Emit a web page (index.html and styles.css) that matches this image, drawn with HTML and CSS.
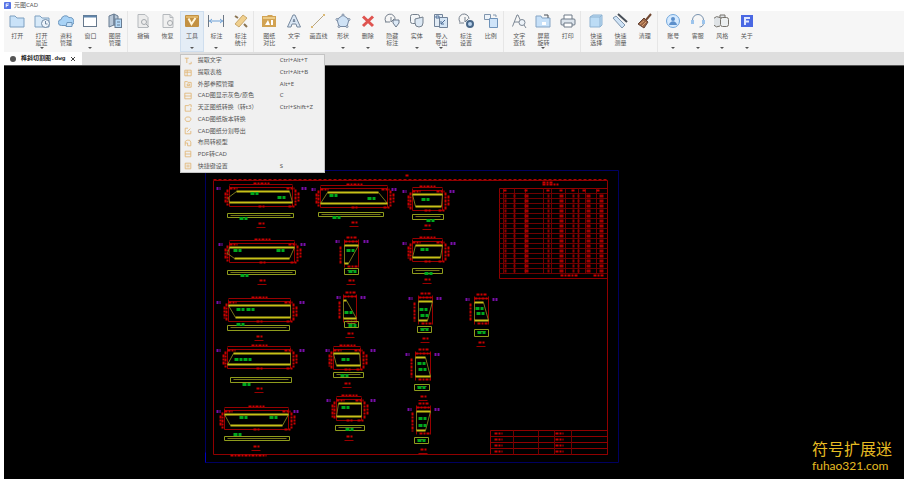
FILE: index.html
```html
<!DOCTYPE html>
<html lang="zh-CN">
<head>
    <meta charset="UTF-8">
    <meta name="viewport" content="width=device-width, initial-scale=1.0">
    <title>元图CAD</title>
    <link rel="stylesheet" href="styles.css">
</head>
<body>
    <header class="titlebar">
        <svg class="logo" viewBox="0 0 8 8"><rect width="8" height="8" rx="1" fill="#5573e6"/><path d="M2.5 6V2.2h3M2.5 4h2.5" stroke="#fff" fill="none"/></svg>
        <span>元图CAD</span>
    </header>

    <nav class="ribbon">
        <!-- File -->
        <div class="group five">
            <button class="tool">
                <svg viewBox="0 0 16 16"><path d="M1 3h5l2 2h7v9H1z" fill="#c9e2f8" stroke="#7d9fc0"/></svg>
                <span>打开</span>
            </button>
            <button class="tool more">
                <svg viewBox="0 0 16 16"><path d="M1 3h5l2 2h7v9H1z" fill="#d8eaf9" stroke="#7d9fc0"/><circle cx="11.5" cy="10.5" r="4" fill="#eef4fa" stroke="#7189a4"/><path d="M11.5 8v3h2" fill="none" stroke="#7189a4"/></svg>
                <span>打开<br>最近</span>
            </button>
            <button class="tool">
                <svg viewBox="0 0 16 16"><path d="M3.5 12.5a3 3 0 0 1-.3-6A4.3 4.3 0 0 1 11 4.600a4 4 0 0 1 1.500 7.900z" fill="#a9d3f6" stroke="#6f97bd"/><path d="M9 9.500h5v4H8z" fill="#c9e2f8" stroke="#6f97bd"/></svg>
                <span>资料<br>管理</span>
            </button>
            <button class="tool more">
                <svg viewBox="0 0 16 16"><rect x="1.500" y="2.500" width="13" height="11" fill="#fff" stroke="#66788c"/><path d="M1.500 3.500h13" stroke="#5f84ab" stroke-width="2"/></svg>
                <span>窗口</span>
            </button>
            <button class="tool">
                <svg viewBox="0 0 16 16"><path d="M2 3l5-2v11l-5 2zM7 1l4 2v10l-4-1z" fill="#b9c8d8" stroke="#687c92"/><rect x="8" y="6" width="6.500" height="8.500" fill="#b5d9f7" stroke="#687c92"/><path d="M10 9h3M10 12h3" stroke="#687c92"/></svg>
                <span>图层<br>管理</span>
            </button>
        </div>

        <!-- Edit -->
        <div class="group five">
            <button class="tool">
                <svg viewBox="0 0 16 16"><path d="M3 1.500h7l3 3v10H3z" fill="#ececec" stroke="#b4b8bc"/><circle cx="9" cy="9" r="2.500" fill="none" stroke="#a4a8ac"/><path d="M11 11l3 3" stroke="#a4a8ac"/></svg>
                <span>撤销</span>
            </button>
            <button class="tool">
                <svg viewBox="0 0 16 16"><path d="M3 1.500h7l3 3v10H3z" fill="#f0f0f0" stroke="#b4b8bc"/><circle cx="10" cy="10" r="2.500" fill="none" stroke="#a4a8ac"/><path d="M10 1.500v3h3" fill="none" stroke="#b4b8bc"/></svg>
                <span>恢复</span>
            </button>
            <div class="dropdown">
                <button class="tool more active" aria-expanded="true">
                    <svg viewBox="0 0 16 16"><rect x="1" y="2" width="14" height="12" rx="1" fill="#c29143"/><path d="M2 3h12v2H2z" fill="#dfb467"/><path d="M4.500 5.500L7.500 11l4-6" fill="none" stroke="#fff6dc" stroke-width="2"/></svg>
                    <span>工具</span>
                </button>
                <div class="menu">
                    <button><svg viewBox="0 0 10 10"><path d="M1 1.500h5M3.500 1.500v6M6 8.500h3V6"/></svg><span>提取文字</span><kbd>Ctrl+Alt+T</kbd></button>
                    <button><svg viewBox="0 0 10 10"><path d="M1 1.500h8v7H1zM1 4h8M4 1.500v7"/></svg><span>提取表格</span><kbd>Ctrl+Alt+B</kbd></button>
                    <button><svg viewBox="0 0 10 10"><path d="M1 2h3l1 1h4v6H1zM4 5h3v2H4z"/></svg><span>外部参照管理</span><kbd>Alt+E</kbd></button>
                    <button><svg viewBox="0 0 10 10"><path d="M1 1.500h8v7H1zM1 5h8"/></svg><span>CAD图显示灰色/原色</span><kbd>C</kbd></button>
                    <button><svg viewBox="0 0 10 10"><path d="M6 2H1.500v7h7V5M6 1h3v3"/></svg><span>天正图纸转换（转t3）</span><kbd>Ctrl+Shift+Z</kbd></button>
                    <button><svg viewBox="0 0 10 10"><path d="M3 2.500h4L9 5 7 8H3L1 5z"/></svg><span>CAD图纸版本转换</span></button>
                    <button><svg viewBox="0 0 10 10"><path d="M5 1.500H1.500v7h7V5M4 6l4-4"/></svg><span>CAD图纸分割导出</span></button>
                    <button><svg viewBox="0 0 10 10"><path d="M1.500 8.500V3L4 1.500h3L8.500 4v4.500h-4V5h-3"/></svg><span>布局转模型</span></button>
                    <button><svg viewBox="0 0 10 10"><path d="M1.500 1.500h7v7h-7zM1.500 5h7"/></svg><span>PDF转CAD</span></button>
                    <button><svg viewBox="0 0 10 10"><path d="M1.500 1.500h7v7h-7zM3 4h4M3 6h4"/></svg><span>快捷键设置</span><kbd>S</kbd></button>
                </div>
            </div>
            <button class="tool more">
                <svg viewBox="0 0 16 16"><path d="M.5 2v12M15.500 2v12" stroke="#6b7785"/><path d="M1 8h14M4 6L1.500 8 4 10M12 6l2.500 2-2.500 2" fill="none" stroke="#6ea2d8"/></svg>
                <span>标注</span>
            </button>
            <button class="tool">
                <svg viewBox="0 0 16 16"><path d="M2 11l8-9 4 3-8 9z" fill="#f0d08f" stroke="#c9a76a"/><path d="M2 3l3 2M11 11l3 3" stroke="#8c7552" stroke-width="2"/></svg>
                <span>标注<br>统计</span>
            </button>
        </div>

        <!-- Draw and annotate -->
        <div class="group ten">
            <button class="tool">
                <svg viewBox="0 0 16 16"><path d="M1 3h5l1-1h4l1 1h3v11H1z" fill="#d2a353"/><path d="M2 4h12v2H2z" fill="#eccb86"/><path d="M4 12l3-5 2 5zM10 7h2v5h-2z" fill="#fff"/></svg>
                <span>图纸<br>对比</span>
            </button>
            <button class="tool more">
                <svg viewBox="0 0 16 16"><path d="M1.500 14L7 2h2l5.500 12H11l-1-3H6l-1 3zM7 8.500h2L8 6z" fill="#d9e6f4" stroke="#77899e"/></svg>
                <span>文字</span>
            </button>
            <button class="tool">
                <svg viewBox="0 0 16 16"><path d="M2 14L14 2" stroke="#b7a684"/><path d="M1 13h2v2H1zM13 1h2v2h-2z" fill="#dbb975"/></svg>
                <span>画直线</span>
            </button>
            <button class="tool more">
                <svg viewBox="0 0 16 16"><path d="M8 2l6 4.500L12 13.500H4L2 6.500z" fill="#cfe2f5" stroke="#778aa3"/><g fill="#fff" stroke="#778aa3"><circle cx="8" cy="2" r="1"/><circle cx="14" cy="6.500" r="1"/><circle cx="12" cy="13.500" r="1"/><circle cx="4" cy="13.500" r="1"/><circle cx="2" cy="6.500" r="1"/></g></svg>
                <span>形状</span>
            </button>
            <button class="tool more">
                <svg viewBox="0 0 16 16"><path d="M3 3.500l10 9.500M13 3.500L3 13" stroke="#df5450" stroke-width="3"/></svg>
                <span>删除</span>
            </button>
            <button class="tool">
                <svg viewBox="0 0 16 16"><path d="M2 9a5 5 0 1 1 9-2M1 9h5M7 4v5l3-3" fill="none" stroke="#77818e"/><path d="M9 7h6v3l-3 4-3-4z" fill="#dce9f6" stroke="#6d7b8c"/></svg>
                <span>隐藏<br>标注</span>
            </button>
            <button class="tool more">
                <svg viewBox="0 0 16 16"><rect x="1.500" y="1.500" width="9" height="9" rx="2" fill="#f4f6f8" stroke="#75808d"/><path d="M6 6l8-2v6a4 4 0 0 1-8 0z" fill="#dce8f4" stroke="#75808d"/></svg>
                <span>实体</span>
            </button>
            <button class="tool more">
                <svg viewBox="0 0 16 16"><path d="M1.500 1.500h8v12h-8z" fill="#e3ecf5" stroke="#71839a"/><path d="M6.500 4.500h8v10h-8z" fill="#d5e5f5" stroke="#71839a"/><path d="M3 3h3v2H3zM12 7l-4 4M8 8v3h3" fill="none" stroke="#4f6f98"/></svg>
                <span>导入<br>导出</span>
            </button>
            <button class="tool">
                <svg viewBox="0 0 16 16"><path d="M2 9a5 5 0 1 1 9-3M1 10h5M7 4v5l3-3" fill="none" stroke="#77818e"/><circle cx="12" cy="11" r="3" fill="#b8d2ec" stroke="#496889" stroke-width="2"/></svg>
                <span>标注<br>设置</span>
            </button>
            <button class="tool">
                <svg viewBox="0 0 16 16"><path d="M1.500 1.500h6v5h-6z" fill="#eef4fa" stroke="#8196ae"/><path d="M6.500 5.500h8v9h-8z" fill="#cfe4f9" stroke="#6f93ba"/><path d="M10 2h3v2" fill="none" stroke="#8196ae"/></svg>
                <span>比例</span>
            </button>
        </div>

        <!-- Output -->
        <div class="group three">
            <button class="tool">
                <svg viewBox="0 0 16 16"><path d="M1.500 13.500L6 2h1l4 9M3 9h5" fill="none" stroke="#7d8895"/><circle cx="11" cy="9.500" r="3" fill="#edf3f9" stroke="#7d8895"/><path d="M13 12l2 3" stroke="#7d8895"/></svg>
                <span>文字<br>查找</span>
            </button>
            <button class="tool more">
                <svg viewBox="0 0 16 16"><path d="M1 3h5l1 2h8v9H1z" fill="#c6e0f8" stroke="#85a4c4"/><path d="M7 9h4v3H7z" fill="#fff"/><path d="M9 2h4v3" fill="none" stroke="#444c56"/></svg>
                <span>屏幕<br>旋转</span>
            </button>
            <button class="tool">
                <svg viewBox="0 0 16 16"><path d="M4 6V2h8v4" fill="#fff" stroke="#6e7a88"/><rect x="1" y="6" width="14" height="6" rx="1" fill="#dce4ec" stroke="#6e7a88"/><path d="M4 10h8v4H4z" fill="#fff" stroke="#6e7a88"/></svg>
                <span>打印</span>
            </button>
        </div>

        <!-- Quick tools -->
        <div class="group three">
            <button class="tool">
                <svg viewBox="0 0 16 16"><path d="M2 4l3-2h9v10l-2 2H2z" fill="#bcdcf5" stroke="#8fb3d2"/><path d="M2 4h10v10M12 4l2-2" fill="none" stroke="#8fb3d2"/></svg>
                <span>快速<br>选择</span>
            </button>
            <button class="tool">
                <svg viewBox="0 0 16 16"><path d="M1 5l3-2 9 9-3 3z" fill="#cfe3f6" stroke="#7f96ae"/><path d="M6 1l9 8" stroke="#474e57" stroke-width="2"/></svg>
                <span>快速<br>测量</span>
            </button>
            <button class="tool">
                <svg viewBox="0 0 16 16"><path d="M14 1L9 7" stroke="#70462f" stroke-width="2"/><path d="M7 5l4 4-4 6-6-4z" fill="#9a6446" stroke="#634334"/><path d="M3 11l4-3M5 13l4-4" stroke="#d7a26e"/></svg>
                <span>清理</span>
            </button>
        </div>

        <!-- Account -->
        <div class="group four">
            <button class="tool more">
                <svg viewBox="0 0 16 16"><circle cx="8" cy="8" r="6.500" fill="#d5eaff" stroke="#74a8dc"/><circle cx="8" cy="6" r="2" fill="#5c8fcb"/><path d="M4 12c1-5 7-5 8 0z" fill="#5c8fcb"/></svg>
                <span>账号</span>
            </button>
            <button class="tool more">
                <svg viewBox="0 0 16 16"><path d="M2.500 8V7a5.500 5.500 0 0 1 11 0v3c0 3-2 4-4 4" fill="none" stroke="#7892ae"/><path d="M1 7h3v4H1zM12 7h3v4h-3z" fill="#9cc4ec"/></svg>
                <span>客服</span>
            </button>
            <button class="tool more">
                <svg viewBox="0 0 16 16"><path d="M6 4.500A5 5 0 1 0 6 13M6 2h5v3H6z" fill="#dfe3e6" stroke="#77736c"/><rect x="6.500" y="4.500" width="8" height="9" rx="2" fill="#eceff0" stroke="#77736c"/></svg>
                <span>风格</span>
            </button>
            <button class="tool more">
                <svg viewBox="0 0 16 16"><rect x="2" y="2" width="12" height="12" fill="#4a68e3"/><path d="M6 12V5h5M6 8.500h4" fill="none" stroke="#dfe7ff" stroke-width="2"/></svg>
                <span>关于</span>
            </button>
        </div>
    </nav>

    <div class="tabs">
        <div class="tab">
            <i class="dot"></i>
            <span>榫斜切割图.dwg</span>
            <button aria-label="关闭"><svg viewBox="0 0 6 6"><path d="M1 1l4 4M5 1L1 5" stroke="#444"/></svg></button>
        </div>
    </div>

    <main class="canvas">
        <svg id="drawing" viewBox="0 0 900 413" preserveAspectRatio="xMinYMin meet"></svg>
        <div class="watermark">
            <p class="name">符号扩展迷</p>
            <p class="site">fuhao321.com</p>
        </div>
    </main>

    <script src="drawing.js"></script>
</body>
</html>
```
FILE: styles.css
```css
* {
    box-sizing: border-box;
}

body {
    margin: 0;
    padding: 0 3px 0 4px;
    min-height: 100vh;
    display: flex;
    flex-direction: column;
    background: #fff;
    color: #555;
    font-family: "Noto Sans", "Noto Sans CJK SC", sans-serif;
    font-size: 6px;
    line-height: 7px;
}

button {
    margin: 0;
    padding: 0;
    border: 0;
    background: none;
    color: inherit;
    font: inherit;
}

/* Title bar */
.titlebar {
    display: flex;
    align-items: center;
    gap: 3px;
    height: 11px;
}

.logo {
    width: 7px;
    height: 7px;
}

/* Ribbon */
.ribbon {
    display: flex;
    gap: 3px;
    height: 41px;
    padding-left: 1px;
    background: #f6f6f6;
}

.group {
    display: flex;
    border-right: 1px solid #e6e6e6;
}

.group:last-child {
    border-right: 0;
}

.three {
    width: 74px;
}

.four {
    width: 98px;
}

.five {
    width: 123px;
}

.ten {
    width: 247px;
}

.tool,
.dropdown {
    flex: 1 1 0;
    min-width: 0;
}

.tool {
    display: flex;
    flex-direction: column;
    align-items: center;
    padding-top: 2px;
    height: 41px;
    text-align: center;
    white-space: nowrap;
}

.tool svg {
    width: 16px;
    height: 16px;
    flex: none;
}

.tool span {
    margin-top: 4px;
    height: 14px;
}

.more::after {
    content: "";
    border: 2px solid transparent;
    border-top-color: #555;
    border-bottom: 0;
}

.tool.active {
    width: 100%;
    background: #e4edf6;
    box-shadow: inset 0 0 0 1px #cfdeee;
}

/* Dropdown menu */
.dropdown {
    position: relative;
}

.menu {
    position: absolute;
    z-index: 1;
    top: 43px;
    left: 0;
    display: flex;
    flex-direction: column;
    width: 145px;
    min-height: 119px;
    background: #f0f0f0;
    border: 1px solid #c4c4c4;
}

.menu button {
    flex: 1;
    display: grid;
    grid-template-columns: 8px 76px 1fr;
    column-gap: 6px;
    align-items: center;
    padding-left: 3px;
    text-align: left;
    white-space: nowrap;
}

.menu svg {
    width: 8px;
    height: 8px;
    fill: none;
    stroke: #dfb26f;
}

.menu kbd {
    font: inherit;
}

/* File tabs */
.tabs {
    height: 14px;
    background: #dedede;
    border-bottom: 1px solid #555;
}

.tab {
    display: inline-flex;
    align-items: center;
    gap: 5px;
    height: 13px;
    padding: 0 6px;
    background: #fff;
    color: #222;
    font-family: "Liberation Mono", "Noto Sans CJK SC", monospace;
    font-weight: bold;
    vertical-align: top;
}

.tab button,
.tab svg {
    display: block;
    width: 6px;
    height: 6px;
}

.dot {
    width: 6px;
    height: 6px;
    border-radius: 50%;
    background: #555;
}

/* Drawing area */
.canvas {
    position: relative;
    flex: 1;
    background: #000;
}

#drawing {
    display: block;
    width: 100%;
}

#drawing * {
    fill: none;
}

#drawing .sheet {
    stroke: #000060;
}

#drawing .corner {
    stroke: #0000c0;
}

#drawing .frame {
    stroke: #900000;
}

#drawing .ticks {
    stroke: #b00000;
    stroke-dasharray: 3 2;
}

#drawing .grid {
    stroke: #700000;
}

#drawing .figures {
    stroke: #900000;
    stroke-width: 2;
    stroke-dasharray: 3 2;
}

#drawing .figures-wide {
    stroke: #a80000;
    stroke-width: 4;
    stroke-dasharray: 3 2;
}

#drawing .edge {
    stroke: #c8c018;
    stroke-width: 2;
}

#drawing .side {
    stroke: #77751a;
}

#drawing .strip {
    stroke: #8f9c1c;
}

#drawing .dim {
    stroke: #980000;
}

#drawing .value {
    stroke: #c80000;
    stroke-width: 2;
    stroke-dasharray: 3 1 2 1;
}

#drawing .note {
    stroke: #00a81e;
    stroke-width: 3;
    stroke-dasharray: 4 1;
}

#drawing .mark {
    stroke: #780fa8;
    stroke-width: 3;
    stroke-dasharray: 2 1;
}

.watermark {
    position: absolute;
    right: 12px;
    bottom: 7px;
    color: #e6bb22;
}

.watermark p {
    margin: 0;
}

.name {
    font-family: "Liberation Sans", "Noto Sans CJK SC", sans-serif;
    font-size: 16px;
    line-height: 20px;
}

.site {
    font-family: Lato, sans-serif;
    font-size: 12px;
    line-height: 12px;
}
```
FILE: drawing.js
```javascript
const drawing = document.getElementById('drawing');
const OFFSET = [4, 66];

// top / bottom: x1, x2, y of the two long edges, tip: x of a pointed left end
// strip: x1, y1, x2, y2; notes: centres of the green labels; marks: purple section marks
const PARTS = [
    { top: [236, 289, 191], bottom: [229, 292, 202], tip: 228, strip: [227, 213, 293, 217], notes: [[254, 193], [281, 197], [243, 218]], marks: [218, 303, 188] },
    { top: [327, 378, 192], bottom: [320, 387, 203], strip: [318, 212, 383, 216], notes: [[333, 195], [371, 198], [336, 217]], marks: [313, 393, 189] },
    { top: [412, 442, 194], bottom: [415, 441, 206], strip: [412, 214, 443, 219], notes: [[425, 199], [430, 220]], marks: [404, 451, 191] },
    { top: [229, 294, 247], bottom: [234, 289, 258], tip: 227, strip: [227, 270, 295, 274], notes: [[237, 250], [280, 250], [244, 275]], marks: [220, 302, 244] },
    { top: [344, 358, 245], bottom: [344, 348, 263], strip: [344, 268, 358, 274], notes: [[350, 250], [352, 271]], marks: [337, 365, 241] },
    { top: [415, 442, 245], bottom: [412, 440, 257], strip: [412, 268, 442, 273], notes: [[424, 249], [428, 273]], marks: [404, 452, 243] },
    { top: [228, 290, 305], bottom: [235, 290, 317], strip: [227, 325, 289, 330], notes: [[240, 309], [250, 309], [240, 324]], marks: [218, 301, 302] },
    { top: [343, 346, 300], bottom: [343, 356, 318], strip: [344, 321, 358, 327], notes: [[348, 312], [352, 325]], marks: [338, 362, 297] },
    { top: [418, 432, 301], bottom: [418, 427, 320], strip: [417, 326, 431, 332], notes: [[423, 309], [424, 315], [424, 329]], marks: [410, 438, 298] },
    { top: [474, 483, 302], bottom: [474, 488, 320], strip: [474, 329, 488, 336], notes: [[479, 308], [480, 313], [481, 332]], marks: [467, 494, 299] },
    { top: [233, 290, 353], bottom: [227, 290, 364], strip: [230, 377, 291, 382], notes: [[238, 359], [247, 359], [246, 384]], marks: [218, 301, 350] },
    { top: [333, 359, 353], bottom: [336, 360, 365], strip: [333, 372, 363, 377], notes: [[345, 359], [344, 375]], marks: [327, 372, 350] },
    { top: [415, 425, 357], bottom: [415, 430, 376], strip: [414, 384, 429, 390], notes: [[421, 363], [422, 369], [421, 387]], marks: [407, 436, 354] },
    { top: [224, 288, 414], bottom: [230, 282, 425], strip: [224, 436, 289, 440], notes: [[243, 417], [273, 417], [237, 434]], marks: [218, 295, 411] },
    { top: [338, 361, 403], bottom: [336, 361, 416], strip: [335, 425, 364, 430], notes: [[345, 407], [349, 429]], marks: [328, 372, 400] },
    { top: [416, 430, 411], bottom: [416, 425, 430], strip: [414, 437, 428, 443], notes: [[422, 418], [422, 425], [421, 440]], marks: [409, 436, 409] }
];

function path(cls, d) {
    const el = document.createElementNS('http://www.w3.org/2000/svg', 'path');
    el.setAttribute('class', cls);
    el.setAttribute('d', d);
    layer.appendChild(el);
}

function line(cls, x1, y1, x2, y2) {
    path(cls, `M${x1} ${y1}L${x2} ${y2}`);
}

function rect(cls, x1, y1, x2, y2) {
    path(cls, `M${x1} ${y1}H${x2}V${y2}H${x1}Z`);
}

const layer = document.createElementNS('http://www.w3.org/2000/svg', 'g');
layer.setAttribute('transform', `translate(${0.5 - OFFSET[0]} ${0.5 - OFFSET[1]})`);
drawing.appendChild(layer);

function drawPart(part) {
    const [tl, tr, ty] = part.top;
    const [bl, br, by] = part.bottom;
    const [sx1, sy1, sx2, sy2] = part.strip;
    const left = Math.min(tl, bl);
    const right = Math.max(tr, br);
    const middle = Math.round((left + right) / 2);
    const wide = right - left > 20;
    const half = wide ? 8 : 5;

    // Dimensions around the outline
    line('dim', left, ty - 4, right, ty - 4);
    line('value', middle - half, ty - 8, middle + half, ty - 8);
    line('dim', left, ty - 6, left, by + 4);
    line('dim', right, ty - 6, right, by + 4);
    line('value', left - 4, ty + 1, left - 4, by + 1);
    if (wide) {
        line('dim', left, ty - 7, right, ty - 7);
        line('value', left, ty - 3, left + 8, ty - 3);
        line('value', right - 6, ty - 3, right + 2, ty - 3);
        line('value', left - 2, ty - 2, left - 2, by + 3);
        line('value', right + 3, ty - 2, right + 3, by + 3);
        line('value', right + 6, ty + 1, right + 6, by - 1);
        line('dim', left, by + 4, right, by + 4);
        line('value', middle - 3, by + 4, middle + 3, by + 4);
        line('value', right - 4, by + 4, right + 3, by + 4);
    } else {
        line('value', left, ty - 4, right, ty - 4);
        line('value', left + 3, by + 3, right, by + 3);
    }

    // Outline
    const tip = part.tip ? `L${part.tip} ${Math.round((ty + by) / 2)}` : '';
    path('side', `M${tl} ${ty}${tip}L${bl} ${by}M${tr} ${ty}L${br} ${by}`);
    line('edge', tl, ty, tr, ty);
    line('edge', bl, by, br, by);

    // Edge view below
    rect('strip', sx1, sy1, sx2, sy2);
    line('side', sx1 + 3, sy1 + 2, sx2 - 3, sy1 + 2);

    part.notes.forEach(([x, y]) => line('note', x - 4, y, x + 4, y));
    line('value', middle - 3, sy2 + 6, middle + 4, sy2 + 6);
    line('dim', middle - 5, sy2 + 10, middle + 4, sy2 + 10);

    const [m1, m2, my] = part.marks;
    line('mark', m1 - 2, my, m1 + 2, my);
    line('mark', m2 - 2, my, m2 + 3, my);
}

// Sheet borders
rect('sheet', 205, 170, 618, 462);
line('corner', 205, 452, 205, 462);
rect('frame', 213, 180, 607, 454);
line('ticks', 213, 179, 607, 179);
line('value', 405, 175, 408, 175);
line('value', 230, 455, 266, 455);

PARTS.forEach(drawPart);

// Parts list
rect('frame', 499, 188, 607, 278);
for (let y = 193; y < 278; y += 5) {
    line('grid', 499, y, 607, y);
}
[503, 514, 525, 543, 551, 565, 578, 585, 596].forEach(x => line('grid', x, 188, x, 273));
[505, 514, 548, 573, 578].forEach(x => line('figures', x, 194, x, 273));
[526, 561, 588, 601].forEach(x => line('figures-wide', x, 194, x, 273));
line('value', 542, 182, 552, 182);
line('value', 542, 184, 558, 184);
[505, 526, 548, 561, 573, 584, 598].forEach(x => line('value', x - 2, 190, x + 2, 190));
line('value', 560, 275, 577, 275);
line('value', 593, 275, 603, 275);

// Title block
rect('frame', 490, 430, 607, 454);
[436, 442, 448].forEach(y => line('frame', 490, y, 607, y));
[513, 538, 554, 571].forEach(x => line('grid', x, 430, x, 454));
[433, 439, 445, 451].forEach(y => {
    line('value', 494, y, 502, y);
    line('value', 555, y, 563, y);
});
```
